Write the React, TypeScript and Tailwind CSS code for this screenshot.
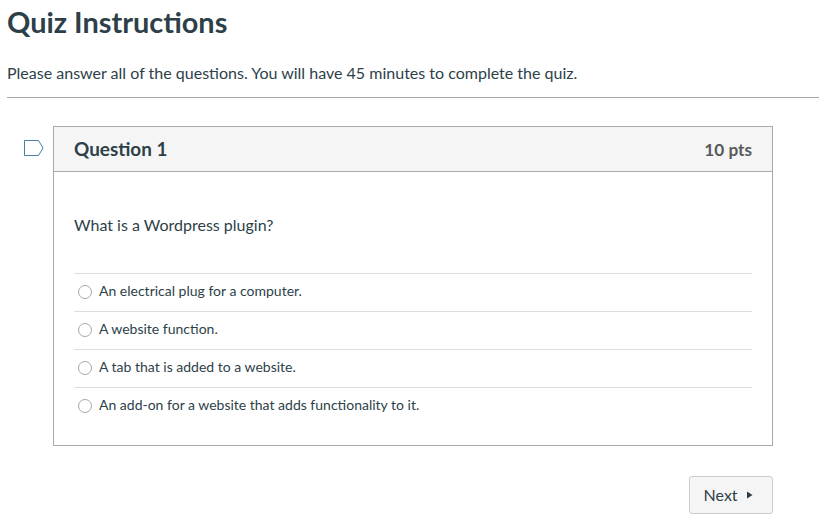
import React from "react";

const answers = [
  "An electrical plug for a computer.",
  "A website function.",
  "A tab that is added to a website.",
  "An add-on for a website that adds functionality to it.",
];

export default function App() {
  return (
    <main className="h-[530px] overflow-hidden bg-white pr-[11px] pl-[7px] font-[Lato,sans-serif] text-[#2d3f49] antialiased">
      <h1 className="h-[46px] text-[28.9px] leading-[43px] font-bold">Quiz Instructions</h1>
      <p className="h-[51px] pt-[15px] text-[16.02px] leading-6">
        Please answer all of the questions. You will have 45 minutes to complete the quiz.
      </p>
      <hr className="border-t border-[#a5a5a5]" />
      <div className="mt-[28px] flex">
        <button aria-label="Flag question" className="mt-[14px] ml-[16px] h-[17px] w-[30px] shrink-0">
          <svg width="21" height="17" viewBox="0 0 21 17" fill="none" stroke="#4380a5">
            <path d="M1.5 .5H15.5L20 8L15.5 15.5H1.5Z" />
          </svg>
        </button>
        <section className="h-[320px] w-[720px] border border-[#aaa]">
          <header className="flex h-[45px] items-center justify-between border-b border-[#aaa] bg-[#f5f5f5] px-5 font-bold">
            <h2 className="text-[18.9px]">Question 1</h2>
            <span className="pt-[2px] text-[17.2px] text-[#595959]">10 pts</span>
          </header>
          <div className="px-5">
            <p className="h-[101px] pt-[41px] text-[16px] leading-6">What is a Wordpress plugin?</p>
            {answers.map((answer) => (
              <label key={answer} className="flex h-[38px] items-center border-t border-[#ddd] pb-[1px] pl-[4px] text-[14px]">
                <input type="radio" name="answer" className="mr-[7px] size-[14px] appearance-none rounded-full border border-[#a6a6a6] bg-white" />
                <span className="pb-[3px]">{answer}</span>
              </label>
            ))}
          </div>
        </section>
      </div>
      <div className="mt-[30px] flex justify-end pr-[46px]">
        <button className="flex h-[38px] w-[84px] items-center rounded-[3px] border border-[#c7cdd1] bg-[#f5f5f5] pl-[13.6px] text-[16px]">
          Next
          <svg className="ml-[9px]" width="6" height="8" viewBox="0 0 6 8" fill="#2d3b45"><path d="M0 .5L5.5 4L0 7.5Z" /></svg>
        </button>
      </div>
    </main>
  );
}
